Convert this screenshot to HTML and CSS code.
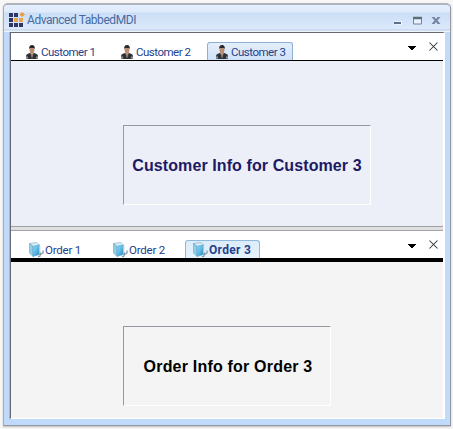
FILE: index.html
```
<!DOCTYPE html>
<html lang="en">
<head>
<meta charset="utf-8">
<title>Advanced TabbedMDI</title>
<link rel="stylesheet" href="styles.css">
</head>
<body>
<svg class="defs" width="0" height="0" aria-hidden="true">
  <defs>
    <linearGradient id="blue" x1="0" y1="0" x2="1" y2="1"><stop offset="0" stop-color="#9bd8f4"/><stop offset=".5" stop-color="#5cb9e6"/><stop offset="1" stop-color="#2384bd"/></linearGradient>
    <symbol id="person" viewBox="0 0 12 14">
      <path d="M0 13.500V11Q0 9.300 2.500 8.600L4.500 7.700H7.500L9.500 8.600Q12 9.300 12 11V13.500Q6 14.500 0 13.500Z" fill="#303136"/>
      <path d="M4 7.500L6 12.500L8 7.500Z" fill="#c9a28b"/>
      <path d="M5.300 9H6.700L6.500 13H5.500Z" fill="#77757a"/>
      <ellipse cx="6" cy="4.800" rx="2.400" ry="3.800" fill="#bd8d73"/>
      <path d="M3.200 4.500Q2.700 0 6 0Q9.300 0 8.800 4.500L8.200 3H3.800Z" fill="#29272a"/>
      <path d="M0 11.500H2V13H0ZM10 11.500H12V13H10Z" fill="#93949c"/>
    </symbol>
    <symbol id="book" viewBox="0 0 15 16">
      <path d="M.5 1.500L7.500 .5L10.500 3L4 4.500Z" fill="#d6edf6" stroke="#6eacca" stroke-width=".6"/>
      <path d="M.5 1.500L4 4.500V14.500L.5 11Z" fill="#91cfe8" stroke="#5199be" stroke-width=".5"/>
      <path d="M4 4.500L10.500 3V12.500L4 14.500Z" fill="url(#blue)" stroke="#5ba2c4" stroke-width=".5"/>
      <path d="M10.500 3.500L11.500 4.500V12L10.500 12.500Z" fill="#d6e3eb"/>
      <path d="M9 15L11 14L11.500 10.500M11.500 12.500L14 11V8.500" fill="none" stroke="#8197ac" stroke-width="1.300"/>
    </symbol>
    <symbol id="arrow" viewBox="0 0 8 5"><path d="M0 0H8V1H7V2H6V3H5V4H3V3H2V2H1V1H0Z" fill="#000"/></symbol>
    <symbol id="close" viewBox="0 0 9 9"><path d="M.5 .5L8.500 8.500M8.500 .5L.5 8.500" stroke="#333" stroke-width="1.050" fill="none"/></symbol>
  </defs>
</svg>
<div class="window">
  <header class="titlebar">
    <svg class="app-icon" width="17" height="16" viewBox="0 0 17 16">
      <path d="M0 1H4V5H0ZM5 1H9V5H5ZM0 6H4V10H0ZM0 11H4V15H0ZM5 11H9V15H5ZM10 11H14V15H10Z" fill="#303567"/>
      <path d="M5 6H9V10H5ZM10 6H14V10H10Z" fill="#e6a54a"/>
      <path d="M13 0L16 2.500L13 5L10.500 2.500Z" fill="#eb9b3a"/>
    </svg>
    <h1 class="title">Advanced TabbedMDI</h1>
    <svg class="controls" width="48" height="9" viewBox="0 0 48 9">
      <path d="M1 7H8" stroke="#fff" stroke-width="3"/><path d="M0 7H7" stroke="#60708c" stroke-width="2"/>
      <path d="M19.500 1.500H27.500V8H19.500Z" fill="#eaf1fc" stroke="#75839d"/><path d="M19 2H28" stroke="#587178" stroke-width="2.500"/>
      <path d="M37.500 1H40.500L42 3L43.500 1H46.500L43.500 4.500L46.500 8H43.500L42 6L40.500 8H37.500L40.500 4.500Z" fill="#7585a6"/>
    </svg>
  </header>
  <main class="client">
    <nav class="tabs customers">
      <span class="tab"><svg class="person"><use href="#person"/></svg><span class="label">Customer 1</span></span>
      <span class="tab"><svg class="person"><use href="#person"/></svg><span class="label">Customer 2</span></span>
      <span class="tab active"><svg class="person"><use href="#person"/></svg><span class="label">Customer 3</span></span>
      <svg class="arrow"><use href="#arrow"/></svg><svg class="close"><use href="#close"/></svg>
    </nav>
    <section class="page customer-page"><div class="info">Customer Info for Customer 3</div></section>
    <div class="splitter"></div>
    <nav class="tabs orders">
      <span class="tab"><svg class="book"><use href="#book"/></svg><span class="label">Order 1</span></span>
      <span class="tab"><svg class="book"><use href="#book"/></svg><span class="label">Order 2</span></span>
      <span class="tab active"><svg class="book"><use href="#book"/></svg><span class="label">Order 3</span></span>
      <svg class="arrow"><use href="#arrow"/></svg><svg class="close"><use href="#close"/></svg>
    </nav>
    <section class="page order-page"><div class="info">Order Info for Order 3</div></section>
  </main>
</div>
</body>
</html>
```
FILE: styles.css
```
* { box-sizing: border-box; }
body { margin: 0; padding: 3px 2px 3px 3px; height: 429px; overflow: hidden; background: #f7f7f7; }
svg { display: block; flex: none; }
.defs { position: absolute; }
.window {
  width: 448px; height: 423px;
  border: 1px solid #96999f; border-top: 2px solid #b0b3b8; border-left-color: #a9adb3;
  border-radius: 5px 5px 0 0;
  background: #bfdafa;
  box-shadow: 0 1px 2px #bbb;
  overflow: hidden;
}
.titlebar {
  height: 27px; display: flex; align-items: flex-start;
  padding: 7px 8px 0 5px;
  background: linear-gradient(#e3eefe 0, #dfeafa 7px, #cbdef6 8px, #dce9fa 24px, #b8cce7 25px, #eef4fc 26px);
}
.title { margin: 1px auto 0 1px; font: 400 12px/15px Roboto, sans-serif; letter-spacing: -.44px; color: #466aa3; white-space: nowrap; }
.controls { margin-top: 4px; }
.client {
  width: 435px; height: 387px; margin-left: 6px;
  border: 1px solid #fff; border-top-color: #666a70; border-left-color: #666a70;
  border-right-width: 2px;
  box-shadow: -1px 0 #a8b5c7;
}
.tabs { display: flex; align-items: flex-end; background: #fff; }
.customers { height: 28px; border-bottom: 1px solid #000; padding: 0 5px 0 0; }
.orders { height: 31px; border-bottom: 4px solid #000; padding: 0 5px 0 0; }
.tab { display: flex; align-items: flex-start; flex: none; height: 18px; border: 1px solid transparent; border-bottom: 0; }
.label { margin-top: 1px; font: 400 11.5px/15px Roboto, sans-serif; letter-spacing: -.5px; color: #25418b; white-space: nowrap; }
.active { border-color: #8faed4; border-radius: 3px 3px 0 0; background: linear-gradient(#e4effc, #cfe1f7); }
.customers .tab { width: 95px; padding: 1px 0 0 9px; }
.customers .tab:first-child { margin-left: 5px; }
.customers .tab.active { margin-left: 1px; width: 86px; padding-left: 8px; }
.person { width: 12px; height: 14px; margin: 1px 3px 0 0; }
.orders .tab { width: 84px; padding: 1px 0 0 8px; }
.orders .tab:first-child { margin-left: 9px; }
.orders .tab.active { margin-left: -3px; width: 75px; padding-left: 7px; }
.book { width: 15px; height: 16px; margin-right: 1px; }
.orders .active { border-color: #91b9da; background: linear-gradient(#dcecfa, #e8f3fc); }
.orders .label { letter-spacing: -.2px; }
.orders .active .label { font-weight: 700; font-size: 12px; letter-spacing: .3px; }
.arrow { width: 8px; height: 5px; margin: 0 13px 9px auto; }
.close { width: 9px; height: 9px; margin-bottom: 9px; }
.page { padding-left: 112px; }
.customer-page { height: 165px; padding-top: 64px; background: #eceff7; }
.order-page { height: 156px; padding-top: 64px; background: #f4f4f4; }
.info {
  height: 80px; padding-top: 2px; display: flex; align-items: center; justify-content: center;
  border: 1px solid #fff; border-top-color: #9799a2; border-left-color: #9799a2;
  font: 700 16px/20px "Liberation Sans", Arial, sans-serif; white-space: nowrap;
}
.customer-page .info { width: 248px; color: #1c1965; letter-spacing: .1px; }
.order-page .info { width: 208px; padding-left: 2px; color: #000; letter-spacing: .2px; }
.splitter { height: 5px; border: solid #a1a1a5; border-width: 1px 0; background: #dfdfe2; }
```
